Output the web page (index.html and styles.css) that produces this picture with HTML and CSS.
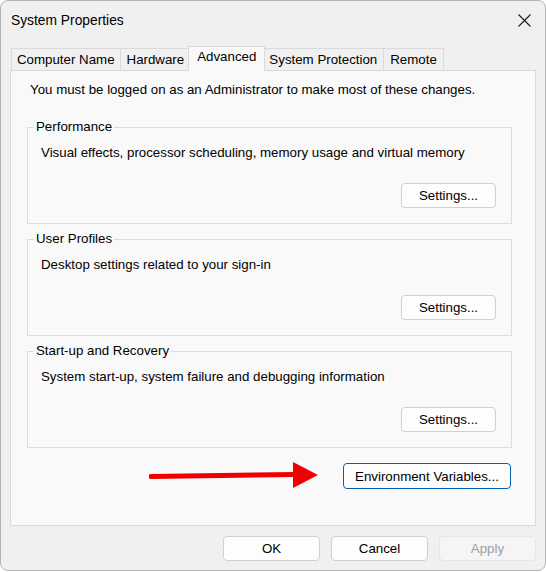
FILE: index.html
```html
<!DOCTYPE html>
<html lang="en">
<head>
  <meta charset="UTF-8">
  <title>System Properties</title>
  <link rel="stylesheet" href="styles.css">
</head>
<body>
  <div class="window">
    <div class="titlebar">
      <span class="title">System Properties</span>
      <svg class="close" width="13" height="13" viewBox="0 0 13 13">
        <path d="M0.5 0.5 L12.5 12.5 M12.5 0.5 L0.5 12.5" stroke="#1a1a1a" stroke-width="1.1" fill="none"/>
      </svg>
    </div>

    <div class="tabs">
      <div class="tab">Computer Name</div>
      <div class="tab">Hardware</div>
      <div class="tab active">Advanced</div>
      <div class="tab">System Protection</div>
      <div class="tab">Remote</div>
    </div>

    <div class="panel">
      <p class="intro">You must be logged on as an Administrator to make most of these changes.</p>

      <fieldset class="group">
        <legend>Performance</legend>
        <p class="desc">Visual effects, processor scheduling, memory usage and virtual memory</p>
        <div class="group-actions"><button class="btn">Settings...</button></div>
      </fieldset>

      <fieldset class="group">
        <legend>User Profiles</legend>
        <p class="desc">Desktop settings related to your sign-in</p>
        <div class="group-actions"><button class="btn">Settings...</button></div>
      </fieldset>

      <fieldset class="group">
        <legend>Start-up and Recovery</legend>
        <p class="desc">System start-up, system failure and debugging information</p>
        <div class="group-actions"><button class="btn">Settings...</button></div>
      </fieldset>

      <div class="env-row">
        <!-- pointer drawn on top of the dialog -->
        <svg class="arrow" width="170" height="28" viewBox="0 0 170 28">
          <path d="M2 14.5 L146 12.5" stroke="#f00000" stroke-width="5" stroke-linecap="round" fill="none"/>
          <path d="M144 0 L169 13 L144 26 Z" fill="#f00000"/>
        </svg>
        <button class="btn default">Environment Variables...</button>
      </div>
    </div>

    <div class="footer">
      <button class="btn wide">OK</button>
      <button class="btn wide">Cancel</button>
      <button class="btn wide" disabled>Apply</button>
    </div>
  </div>
</body>
</html>
```

FILE: styles.css
```css
body {
  margin: 0;
  background: #ffffff;
  font-family: "Liberation Sans", Arial, sans-serif;
  font-size: 13.3px;
  color: #000;
}

.window {
  width: 546px;
  height: 571px;
  box-sizing: border-box;
  border: 1px solid #b4b4b4;
  border-radius: 8px;
  background: #f0f0f0;
  overflow: hidden;
}

.titlebar {
  height: 39px;
  display: flex;
  align-items: center;
  justify-content: space-between;
  padding: 0 14px 0 10px;
}

.title {
  font-size: 13.8px;
}

.close {
  display: block;
}

.tabs {
  display: flex;
  align-items: flex-end;
  height: 30px;
  padding-left: 10px;
  position: relative;
  z-index: 1;
}

.tab {
  height: 21px;
  line-height: 21px;
  padding: 0 6px;
  border: 1px solid #dadada;
  border-bottom: none;
  margin-left: -1px;
  background: #f0f0f0;
  white-space: nowrap;
}

.tab:first-child {
  margin-left: 0;
  padding: 0 5px;
}

.tab.active {
  height: 24px;
  line-height: 20px;
  padding: 0 8px;
  margin: 0 -2px 0 -3px;
  background: #f9f9f9;
  position: relative;
  z-index: 2;
  margin-bottom: -1px;
}

.panel {
  width: 526px;
  height: 456px;
  box-sizing: border-box;
  margin-left: 9px;
  border: 1px solid #dadada;
  background: #f9f9f9;
  padding: 10px 23px 0 16px;
}

.intro {
  margin: 0 0 0 3px;
  line-height: 18px;
}

.group {
  margin: 19px 0 0;
  padding: 8px 15px 15px 13px;
  border: 1px solid #dcdcdc;
  min-width: 0;
}

.group + .group {
  margin-top: 6px;
}

.group legend {
  padding: 0 2px;
  margin-left: -7px;
  line-height: 18px;
}

.desc {
  margin: 0;
  line-height: 18px;
}

.group-actions {
  display: flex;
  justify-content: flex-end;
  margin-top: 21px;
}

.btn {
  font-family: inherit;
  font-size: 13.3px;
  height: 25px;
  width: 95px;
  box-sizing: border-box;
  border: 1px solid #d0d0d0;
  border-radius: 4px;
  background: #fdfdfd;
  color: #000;
  padding: 0;
}

.btn.default {
  width: 168px;
  height: 26px;
  border-color: #005fb8;
}

.btn:disabled {
  background: #f5f5f5;
  border-color: #e6e6e6;
  color: #a0a0a0;
}

.env-row {
  display: flex;
  align-items: center;
  justify-content: flex-end;
  gap: 24px;
  margin-top: 14px;
  padding-right: 1px;
}

.arrow {
  display: block;
}

.footer {
  display: flex;
  justify-content: flex-end;
  gap: 11px;
  padding: 10px 9px 0 0;
}

.btn.wide {
  width: 97px;
}
```
